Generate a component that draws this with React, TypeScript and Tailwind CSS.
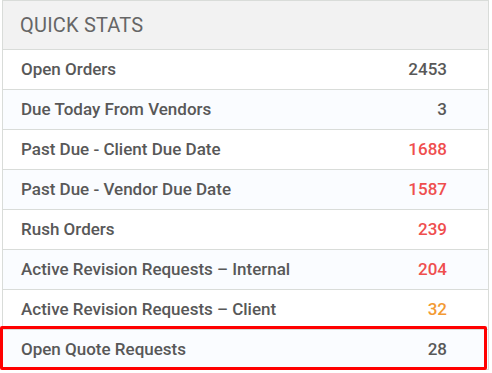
import React from 'react';

type Stat = { label: string; value: number; tone?: 'red' | 'orange' };

const stats: Stat[] = [
  { label: 'Open Orders', value: 2453 },
  { label: 'Due Today From Vendors', value: 3 },
  { label: 'Past Due - Client Due Date', value: 1688, tone: 'red' },
  { label: 'Past Due - Vendor Due Date', value: 1587, tone: 'red' },
  { label: 'Rush Orders', value: 239, tone: 'red' },
  { label: 'Active Revision Requests \u2013 Internal', value: 204, tone: 'red' },
  { label: 'Active Revision Requests \u2013 Client', value: 32, tone: 'orange' },
  { label: 'Open Quote Requests', value: 28 },
];

const toneClass = (tone?: Stat['tone']) => {
  if (tone === 'red') return 'text-[#ef4e4e]';
  if (tone === 'orange') return 'text-[#f39a33]';
  return 'text-[#585858]';
};

export default function App() {
  return (
    <div className="relative w-[492px] h-[373px] bg-white overflow-hidden font-['Roboto',sans-serif]">
      <div className="ml-[2px] w-[487px] border-x border-t border-[#d9dcd9]">
        <div className="h-[49px] bg-[#f2f2f2] border-b border-[#d9dcd9] flex items-center pl-[17px]">
          <h2 className="text-[20px] leading-none text-[#666666] tracking-[0.2px]">QUICK STATS</h2>
        </div>
        {stats.map((s, i) => (
          <div
            key={s.label}
            className={`h-[40px] border-b border-[#d9dcd9] flex items-center justify-between pl-[18px] pr-[41px] text-[17px] leading-none font-medium ${i % 2 === 1 ? 'bg-[#fafcff]' : 'bg-white'}`}
          >
            <span className="text-[#585858]">{s.label}</span>
            <span className={toneClass(s.tone)}>{s.value}</span>
          </div>
        ))}
      </div>
      {/* highlight around the last row */}
      <div className="absolute left-0 top-[326px] w-[487px] h-[44px] border-[3px] border-[#ff0000] rounded-[2px]" />
    </div>
  );
}
